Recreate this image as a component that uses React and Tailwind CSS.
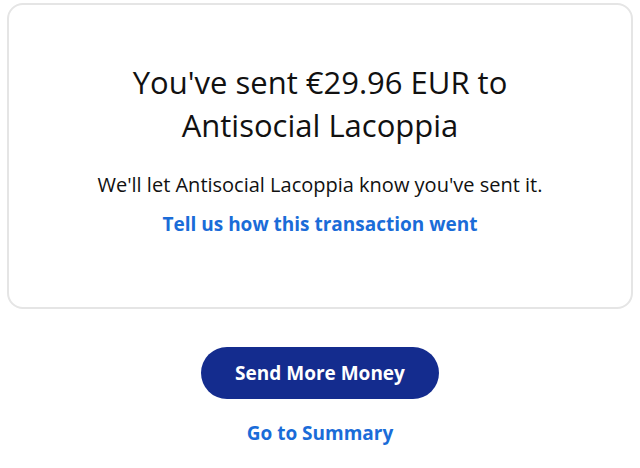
import React from "react";

export default function App() {
  return (
    <div className="w-[640px] h-[468px] bg-white font-['Open_Sans',sans-serif] pt-[3px] px-[7px]">
      <div className="h-[306px] rounded-[16px] border-2 border-[#e5e5e5] flex flex-col items-center pt-[56px]">
        <h1 className="text-[31px] leading-[43px] text-[#111] text-center w-[430px]">
          You've sent €29.96 EUR to Antisocial Lacoppia
        </h1>
        <p className="mt-[25px] text-[20px] leading-[26px] text-[#111]">
          We'll let Antisocial Lacoppia know you've sent it.
        </p>
        <a href="#" className="mt-[13px] text-[19px] leading-[26px] font-bold text-[#1a6cd8]">
          Tell us how this transaction went
        </a>
      </div>
      <div className="flex flex-col items-center mt-[38px]">
        <button className="w-[238px] h-[52px] rounded-full bg-[#142c8e] text-white text-[19px] font-bold">
          Send More Money
        </button>
        <a href="#" className="mt-[21px] text-[19px] leading-[26px] font-bold text-[#1a6cd8]">
          Go to Summary
        </a>
      </div>
    </div>
  );
}
